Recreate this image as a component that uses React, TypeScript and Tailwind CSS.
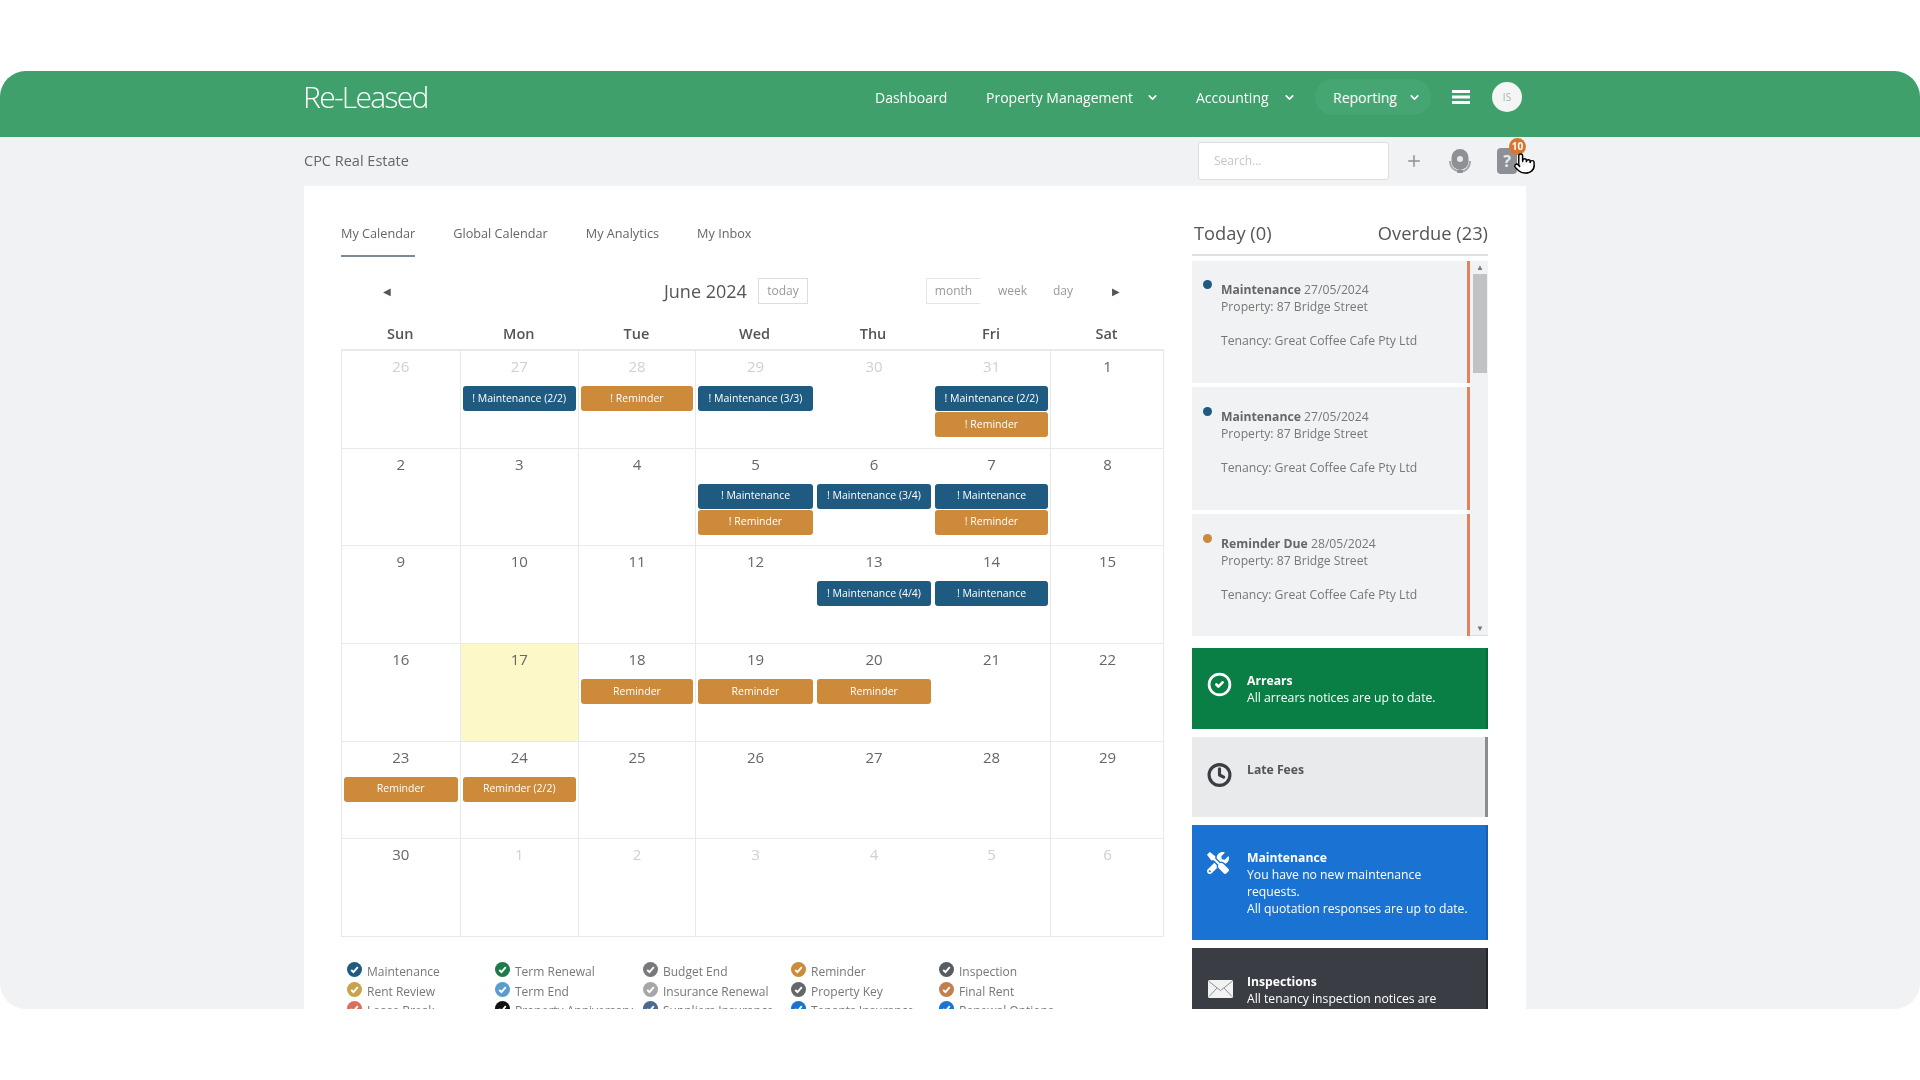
import React from "react";
import { ChevronDown, Plus, CircleCheck, Clock, Pointer } from "lucide-react";
import { FaTools } from "react-icons/fa";

type Ev = { t: string; c: "b" | "o" };
type Cell = { d: number; m?: boolean; today?: boolean; e?: Ev[] };

const M = (t: string): Ev => ({ t, c: "b" });
const R = (t: string): Ev => ({ t, c: "o" });

const weeks: Cell[][] = [
  [
    { d: 26, m: true },
    { d: 27, m: true, e: [M("! Maintenance (2/2)")] },
    { d: 28, m: true, e: [R("! Reminder")] },
    { d: 29, m: true, e: [M("! Maintenance (3/3)")] },
    { d: 30, m: true },
    { d: 31, m: true, e: [M("! Maintenance (2/2)"), R("! Reminder")] },
    { d: 1 },
  ],
  [
    { d: 2 },
    { d: 3 },
    { d: 4 },
    { d: 5, e: [M("! Maintenance"), R("! Reminder")] },
    { d: 6, e: [M("! Maintenance (3/4)")] },
    { d: 7, e: [M("! Maintenance"), R("! Reminder")] },
    { d: 8 },
  ],
  [
    { d: 9 },
    { d: 10 },
    { d: 11 },
    { d: 12 },
    { d: 13, e: [M("! Maintenance (4/4)")] },
    { d: 14, e: [M("! Maintenance")] },
    { d: 15 },
  ],
  [
    { d: 16 },
    { d: 17, today: true },
    { d: 18, e: [R("Reminder")] },
    { d: 19, e: [R("Reminder")] },
    { d: 20, e: [R("Reminder")] },
    { d: 21 },
    { d: 22 },
  ],
  [
    { d: 23, e: [R("Reminder")] },
    { d: 24, e: [R("Reminder (2/2)")] },
    { d: 25 },
    { d: 26 },
    { d: 27 },
    { d: 28 },
    { d: 29 },
  ],
  [
    { d: 30 },
    { d: 1, m: true },
    { d: 2, m: true },
    { d: 3, m: true },
    { d: 4, m: true },
    { d: 5, m: true },
    { d: 6, m: true },
  ],
];

const colBorder = [
  "border-r border-[#e8e9ea]",
  "border-r border-[#e8e9ea]",
  "border-r border-[#e8e9ea]",
  "",
  "",
  "border-r border-[#e8e9ea]",
  "",
];

const legend: [string, string][] = [
  ["Maintenance", "#1f5a80"],
  ["Term Renewal", "#1f7a4a"],
  ["Budget End", "#77797c"],
  ["Reminder", "#cc8a3a"],
  ["Inspection", "#565c63"],
  ["Rent Review", "#c9a24e"],
  ["Term End", "#5b9bd0"],
  ["Insurance Renewal", "#a5a7a9"],
  ["Property Key", "#63676b"],
  ["Final Rent", "#c07f4d"],
  ["Lease Break", "#d9705f"],
  ["Property Anniversary", "#111111"],
  ["Suppliers Insurance", "#4a6a8f"],
  ["Tenants Insurance", "#1a73d2"],
  ["Renewal Options", "#1a73d2"],
];

const tasks = [
  { title: "Maintenance", date: "27/05/2024", dot: "bg-[#1f5a80]", h: "h-[122px] pt-[20px]" },
  { title: "Maintenance", date: "27/05/2024", dot: "bg-[#1f5a80]", h: "h-[123px] pt-[21px]" },
  { title: "Reminder Due", date: "28/05/2024", dot: "bg-[#cc8a3a]", h: "h-[122px] pt-[21px]" },
];

function LegendCheck({ color }: { color: string }) {
  return (
    <svg width="15" height="15" viewBox="0 0 16 16" className="shrink-0 -mt-[5px]">
      <circle cx="8" cy="8" r="8" fill={color} />
      <path d="M4.5 8.5l2.4 2.4 4.6-5.4" fill="none" stroke="#fff" strokeWidth="2" />
    </svg>
  );
}

function NavItem({ label, gap }: { label: string; gap: string }) {
  return (
    <div className={`flex items-center ${gap}`}>
      <span>{label}</span>
      <ChevronDown size={13} strokeWidth={3} />
    </div>
  );
}

export default function App() {
  return (
    <div className="h-[1080px] overflow-hidden bg-white pt-[71px] font-['Open_Sans',sans-serif]">
      <div className="h-[938px] overflow-hidden rounded-[26px] bg-[#f1f2f4] blur-[0.35px]">
        {/* green header */}
        <header className="flex h-[66px] items-start bg-[#3fa06b] pl-[303px] pt-[9px] text-[14px] text-white">
          <div className="w-[125px] whitespace-nowrap text-[30px] font-light leading-[34px] tracking-[-1.700px]">Re-Leased</div>
          <nav className="ml-[447px] flex h-[34px] items-center">
            <span className="w-[111px]">Dashboard</span>
            <div className="w-[210px]">
              <NavItem label="Property Management" gap="gap-[13px]" />
            </div>
            <div className="w-[119px]">
              <NavItem label="Accounting" gap="gap-[14px]" />
            </div>
            <div className="flex h-[36px] w-[116px] items-center rounded-full bg-[#46a673] pl-[18px]">
              <NavItem label="Reporting" gap="gap-[11px]" />
            </div>
            <svg width="18" height="14" viewBox="0 0 18 14" className="ml-[21px]">
              <rect width="18" height="3" fill="#fff" />
              <rect y="5.5" width="18" height="3" fill="#fff" />
              <rect y="11" width="18" height="3" fill="#fff" />
            </svg>
            <div className="ml-[22px] flex size-[30px] items-center justify-center rounded-full bg-[#f4f5f4] text-[10px] text-[#a9aeb0]">
              IS
            </div>
          </nav>
        </header>

        {/* sub bar */}
        <div className="flex h-[49px] items-center pb-[2px] pl-[304px] pr-[394px]">
          <span className="w-[894px] text-[14.500px] text-[#666]">CPC Real Estate</span>
          <div className="flex h-[38px] w-[191px] items-center rounded-[3px] border border-[#dddedf] bg-white pl-[15px] text-[12px] text-[#c4c5c6]">
            Search...
          </div>
          <Plus size={18} strokeWidth={2} className="ml-[16px] text-[#8d8f92]" />
          <svg width="24" height="26" viewBox="0 0 24 26" className="ml-[25px]">
            <path d="M12 1a8.5 8.5 0 0 1 8.5 8.5v4A8.5 8.5 0 0 1 3.5 13.5v-4A8.5 8.5 0 0 1 12 1z" fill="#8d9094" />
            <circle cx="12" cy="11" r="3" fill="#e8e9ea" />
            <path d="M2 13c0 6 4 10 10 10.5s10-4.500 10-10.500" fill="none" stroke="#a5a8aa" strokeWidth="2" />
            <rect x="9" y="22" width="6" height="3" rx="1" fill="#8d9094" />
          </svg>
          <div className="relative ml-[25px] flex h-[26px] w-[20px] items-center justify-center rounded-[4px] bg-[#8d9094] text-[16px] font-bold text-[#e8e9ea]">
            ?
            <span className="absolute -right-[9px] -top-[10px] flex size-[17px] items-center justify-center rounded-full bg-[#d9762e] text-[10px] font-bold text-white">
              10
            </span>
            <Pointer size={23} strokeWidth={1.5} className="absolute -right-[19px] top-[4px] fill-white text-black" />
          </div>
        </div>

        {/* white card */}
        <main className="ml-[304px] flex h-[823px] w-[1222px] overflow-hidden bg-white pl-[37px] pt-[36px] text-[#666]">
          {/* calendar column */}
          <section className="w-[823px] shrink-0">
            <div className="flex h-[35px] gap-[38px] text-[12.700px]">
              <div className="h-[35px] border-b-2 border-[#7d8a96] pt-[2px] text-[#666]">My Calendar</div>
              <div className="pt-[2px]">Global Calendar</div>
              <div className="pt-[2px]">My Analytics</div>
              <div className="pt-[2px]">My Inbox</div>
            </div>

            <div className="mt-[21px] flex h-[26px] items-center text-[12px] text-[#999]">
              <span className="ml-[42px] w-[281px] text-[10px] text-[#555]">◀</span>
              <span className="w-[94px] text-[18px] text-[#555]">June 2024</span>
              <span className="flex h-[26px] w-[50px] items-center justify-center border border-[#dddddd]">today</span>
              <span className="ml-[118px] flex h-[26px] w-[54px] items-center justify-center border-y border-l border-[#e4e4e4]">month</span>
              <span className="ml-[18px] w-[55px]">week</span>
              <span className="w-[59px]">day</span>
              <span className="text-[10px] text-[#555]">▶</span>
            </div>

            <div className="mt-[20px] grid h-[20px] grid-cols-[118.500px_118.500px_117px_119px_118px_118px_113px] text-center text-[14.500px] font-semibold leading-[20px] text-[#555]">
              {["Sun", "Mon", "Tue", "Wed", "Thu", "Fri", "Sat"].map((d) => (
                <div key={d}>{d}</div>
              ))}
            </div>

            <div className="mt-[5px] grid w-[823px] grid-cols-[118.500px_118.500px_117px_119px_118px_118px_113px] border-l border-r border-t-2 border-[#e8e9ea]">
              {weeks.map((w, wi) =>
                w.map((c, ci) => (
                  <div
                    key={`${wi}-${ci}`}
                    className={`flex h-[97.700px] flex-col border-b border-[#e8e9ea] ${colBorder[ci]} ${c.today ? "bg-[#fdf8c8]" : ""}`}
                  >
                    <div className={`h-[35px] pt-[5px] text-center text-[15px] leading-[20px] ${c.m ? "text-[#cfd0d1]" : "text-[#666]"}`}>
                      {c.d}
                    </div>
                    <div className="flex flex-col gap-[1px] px-[2px]">
                      {c.e?.map((ev) => (
                        <div
                          key={ev.t}
                          className={`flex h-[25px] items-center justify-center rounded-[3px] text-[10.500px] text-white ${ev.c === "b" ? "bg-[#1f5a80]" : "bg-[#cc8a3a]"}`}
                        >
                          {ev.t}
                        </div>
                      ))}
                    </div>
                  </div>
                )),
              )}
            </div>

            <div className="ml-[6px] mt-[27px] grid grid-cols-[148px_148px_148px_148px_148px] gap-y-[3.500px] text-[12px] leading-[16px] text-[#777]">
              {legend.map(([t, col]) => (
                <div key={t} className="flex items-center gap-[5px]">
                  <LegendCheck color={col} />
                  <span className="whitespace-nowrap">{t}</span>
                </div>
              ))}
            </div>
          </section>

          {/* right column */}
          <aside className="ml-[28px] w-[296px] shrink-0">
            <div className="flex h-[34px] items-start justify-between border-b-2 border-[#dfe0e1] pl-[2px] text-[18.300px] leading-[22px] text-[#555]">
              <span>Today (0)</span>
              <span>Overdue (23)</span>
            </div>

            <div className="mt-[5px] flex h-[375px] border-b border-[#dcdddd] bg-[#f1f2f4]">
              <div className="flex w-[278px] flex-col gap-[4px] bg-white">
                {tasks.map((t, i) => (
                  <div
                    key={i}
                    className={`flex ${t.h} shrink-0 border-r-[3px] border-[#e2825f] bg-[#f1f2f4] pl-[11px] text-[12.200px] leading-[17px] text-[#777]`}
                  >
                    <span className={`mt-[-1px] size-[9px] rounded-full ${t.dot}`} />
                    <div className="ml-[9px]">
                      <div>
                        <b className="font-bold text-[#666]">{t.title}</b> {t.date}
                      </div>
                      <div>Property: 87 Bridge Street</div>
                      <div className="h-[17px]" />
                      <div>Tenancy: Great Coffee Cafe Pty Ltd</div>
                    </div>
                  </div>
                ))}
              </div>
              <div className="ml-[3px] flex w-[14px] flex-col items-center text-[8px] leading-[12px] text-[#777]">
                <span>▲</span>
                <div className="mt-[1px] h-[99px] w-[14px] bg-[#c1c2c3]" />
                <span className="mt-[249px]">▼</span>
              </div>
            </div>

            <div className="mt-[12px] flex flex-col gap-[8px] text-[12.200px] leading-[17px]">
              <div className="flex h-[81px] border-r-2 border-[#0a6a3a] bg-[#0a7f45] pl-[16px] pt-[24px] text-white">
                <CircleCheck size={25} strokeWidth={2.6} className="-ml-[1px] w-[25px] shrink-0" />
                <div className="ml-[15px]">
                  <b className="block font-bold">Arrears</b>
                  All arrears notices are up to date.
                </div>
              </div>
              <div className="flex h-[80px] border-r-[3px] border-[#8a8c8e] bg-[#e9eaeb] pl-[16px] pt-[24px] text-[#555]">
                <Clock size={26} strokeWidth={3} className="-ml-[1px] mt-[1px] w-[25px] shrink-0 text-[#3a3e44]" />
                <div className="ml-[15px]">
                  <b className="block font-bold">Late Fees</b>
                </div>
              </div>
              <div className="flex h-[115px] border-r-2 border-[#1a5fa8] bg-[#1a73d2] pl-[16px] pt-[24px] text-white">
                <FaTools size={22} className="-ml-[1px] mt-[3px] w-[22px] shrink-0" />
                <div className="ml-[18px] w-[240px]">
                  <b className="block font-bold">Maintenance</b>
                  You have no new maintenance
                  <br />
                  requests.
                  <br />
                  All quotation responses are up to date.
                </div>
              </div>
              <div className="flex h-[100px] border-r-2 border-[#22252a] bg-[#3a3e44] pl-[16px] pt-[25px] text-white">
                <svg width="25" height="18" viewBox="0 0 25 18" className="mt-[7px] shrink-0">
                  <rect width="25" height="18" rx="1.500" fill="#f2f2f2" />
                  <path d="M1 1.500l11.500 9 11.500-9M1 16.500l8-8.500M24 16.500l-8-8.500" fill="none" stroke="#8c8f93" strokeWidth="1" />
                </svg>
                <div className="ml-[14px] w-[230px]">
                  <b className="block font-bold">Inspections</b>
                  All tenancy inspection notices are
                  <br />
                  up to date.
                </div>
              </div>
            </div>
          </aside>
        </main>
      </div>
    </div>
  );
}
